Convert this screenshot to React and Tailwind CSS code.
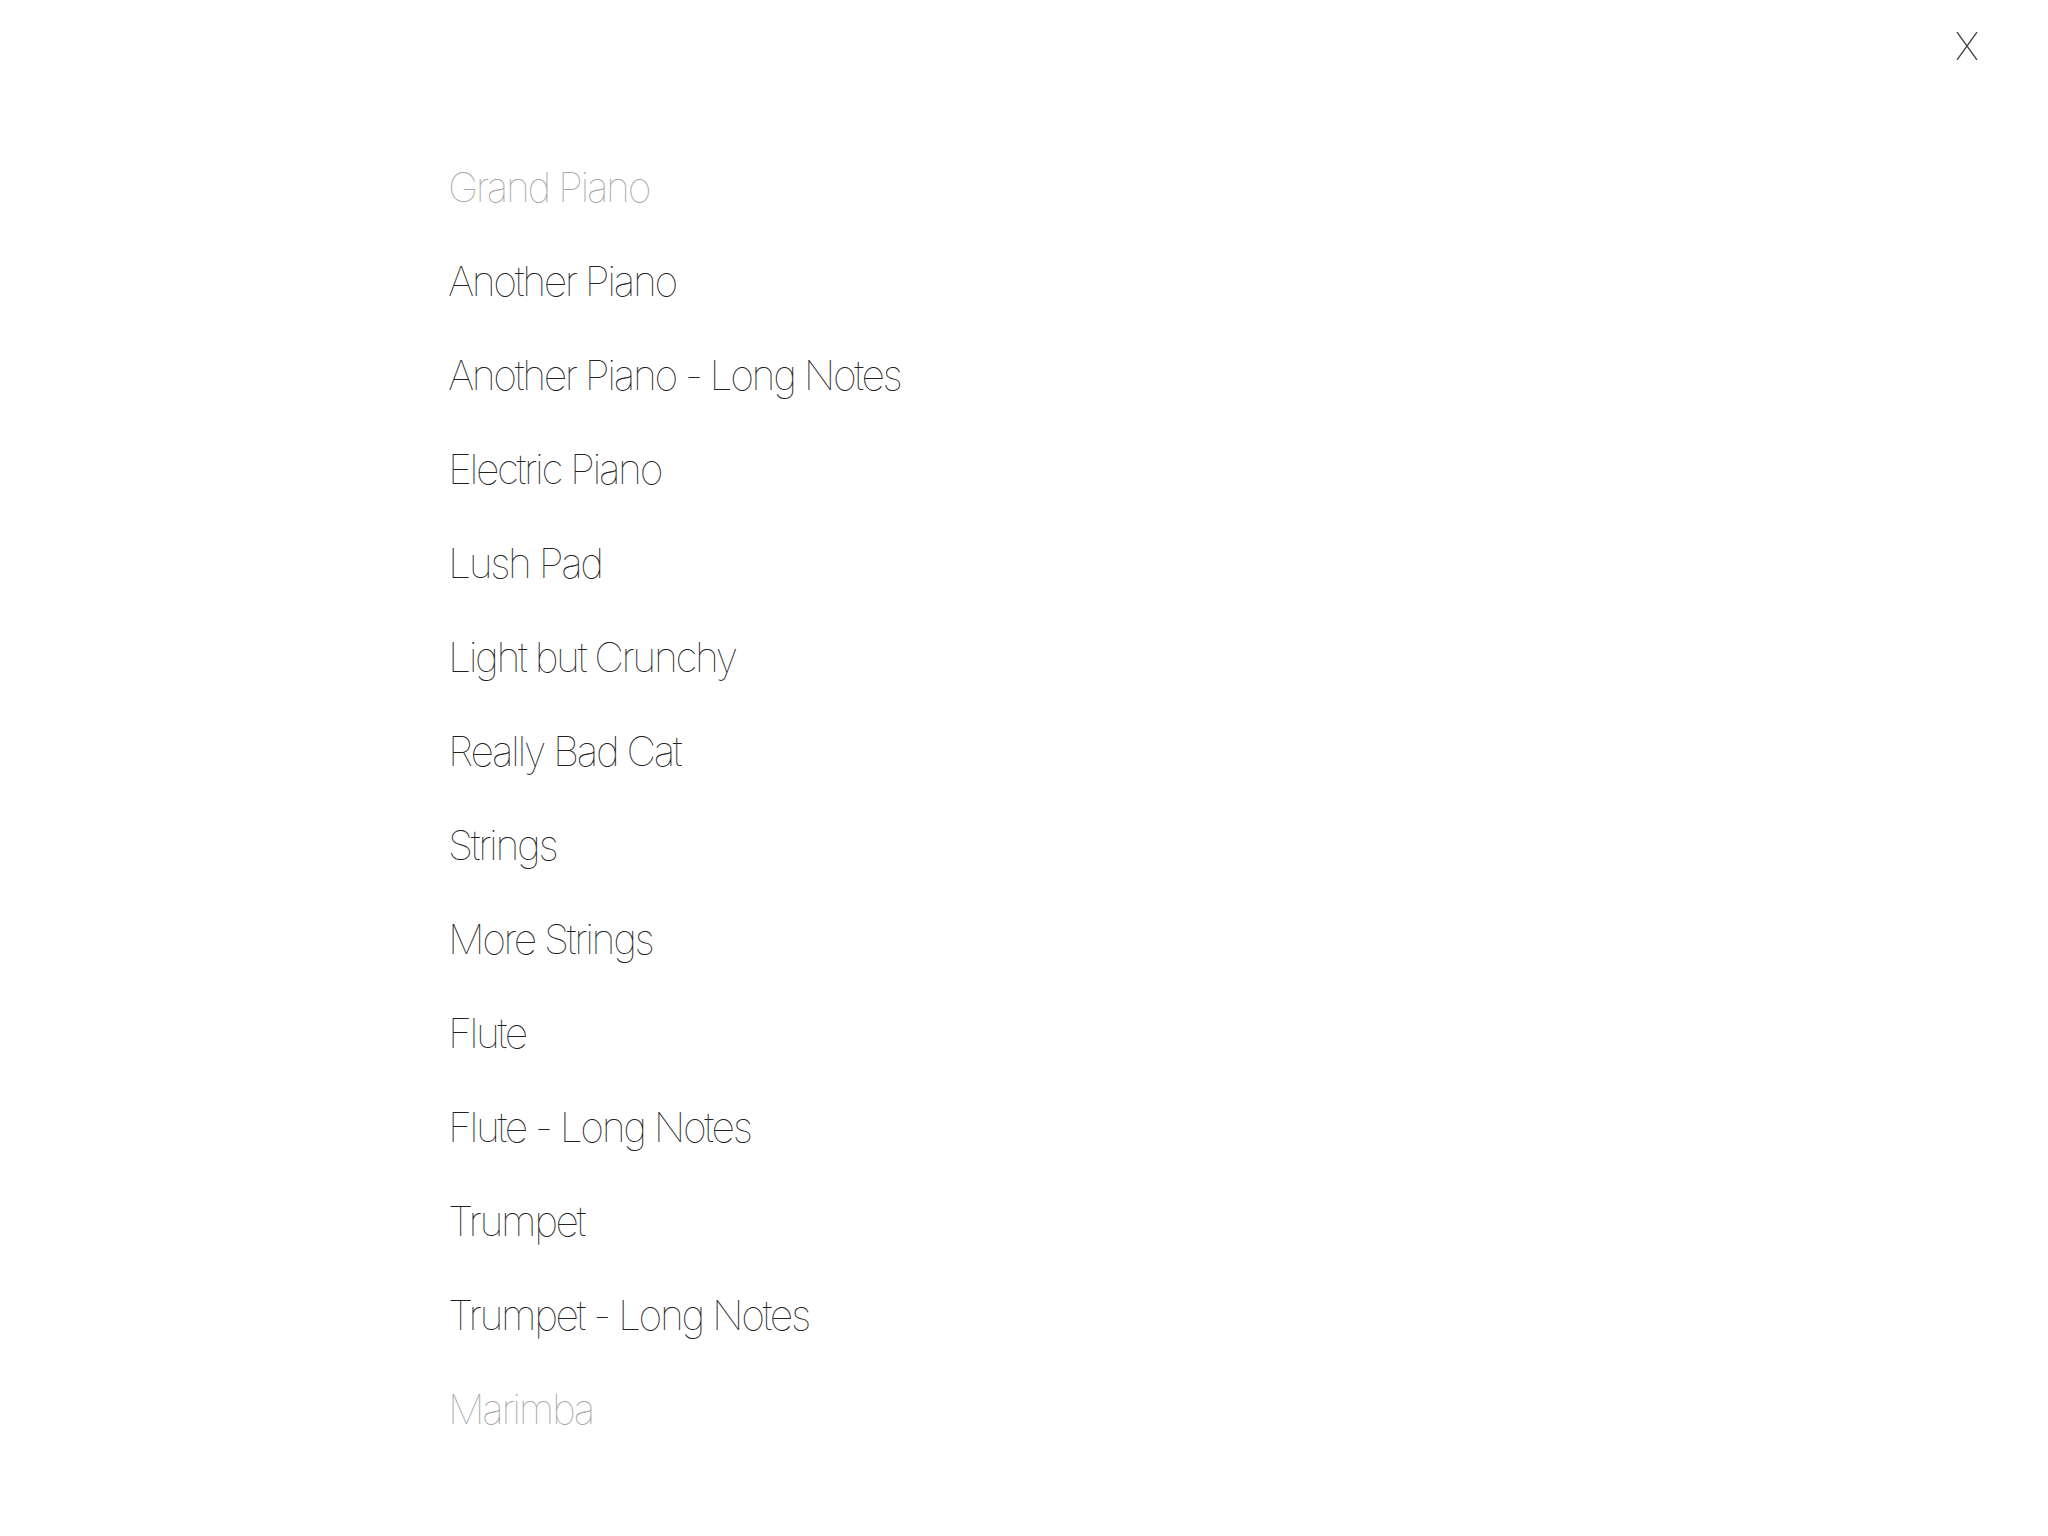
import React from 'react';

const instruments = [
  'Grand Piano',
  'Another Piano',
  'Another Piano - Long Notes',
  'Electric Piano',
  'Lush Pad',
  'Light but Crunchy',
  'Really Bad Cat',
  'Strings',
  'More Strings',
  'Flute',
  'Flute - Long Notes',
  'Trumpet',
  'Trumpet - Long Notes',
  'Marimba',
];

const App = () => {
  return (
    <div className="min-h-screen w-full bg-white relative font-['Inter','Liberation_Sans',sans-serif]">
      {/* close button */}
      <button className="absolute top-[32px] right-[70px] w-[22px] h-[28px] text-[#444]">
        <svg viewBox="0 0 22 28" className="w-full h-full" fill="none" stroke="currentColor" strokeWidth="1.3">
          <path d="M1 0 L21 28 M21 0 L1 28" />
        </svg>
      </button>

      <ul className="pl-[448px] pt-[141px] flex flex-col">
        {instruments.map((name, i) => {
          const faded = i === 0 || i === instruments.length - 1;
          return (
            <li
              key={name}
              className={`h-[94px] flex items-center text-[41px] font-thin tracking-[-2.4px] ${faded ? 'text-[#a8a8a8]' : 'text-[#222]'}`}
            >
              {name}
            </li>
          );
        })}
      </ul>
    </div>
  );
};

export default App;
